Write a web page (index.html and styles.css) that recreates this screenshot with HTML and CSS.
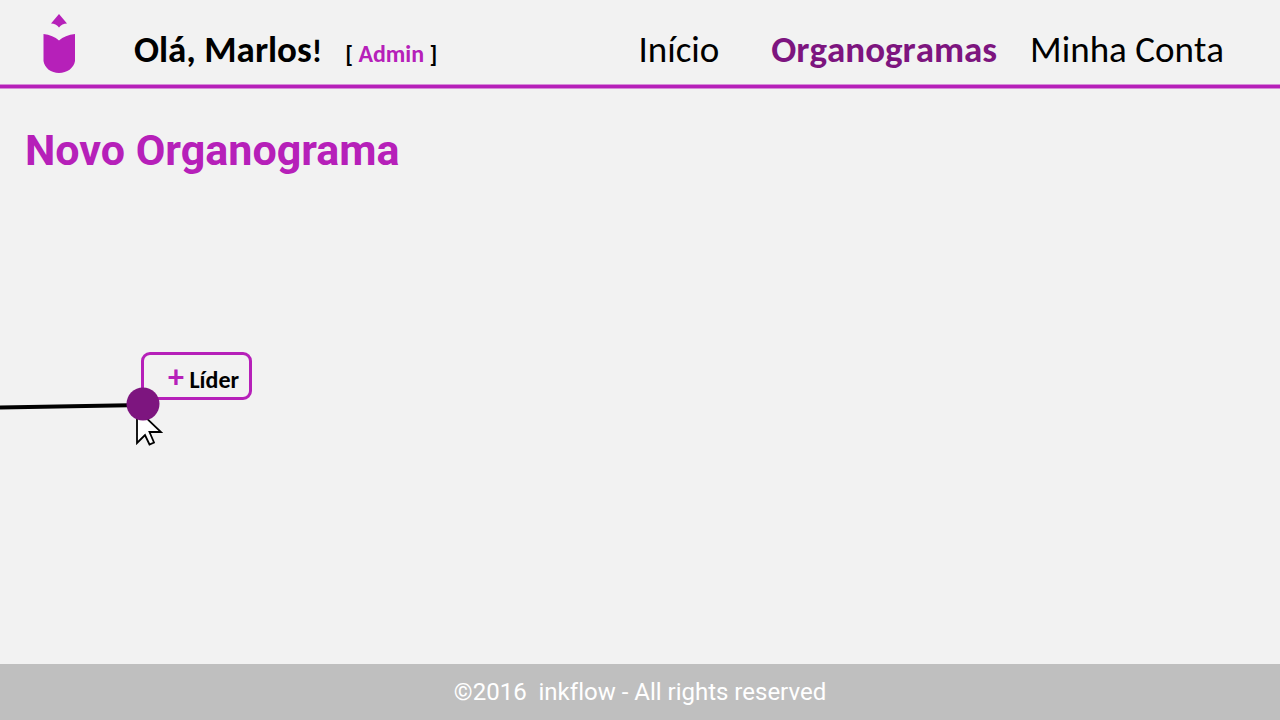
FILE: index.html
```html
<!DOCTYPE html>
<html lang="pt-BR">
<head>
<meta charset="utf-8">
<meta name="viewport" content="width=device-width, initial-scale=1">
<title>Novo Organograma</title>
<link rel="stylesheet" href="styles.css">
</head>
<body>
<header class="header">
  <svg class="logo" viewBox="0 0 34 60" aria-label="inkflow" role="img">
    <path d="M17 0L25 9.500Q20 9.500 17 13.500Q14 9.500 9 9.500Z"/>
    <path d="M1.500 20Q11 21 17 26.500Q23 21 33 20V47C32 54 25 59 17 59C9 59 2.500 54 1.500 47Z"/>
  </svg>
  <p class="greeting"><span class="name">Olá, Marlos<span class="mark">!</span></span><span class="role">[ <span class="role-name">Admin</span> ]</span></p>
  <nav class="nav">
    <a class="link" href="#">Início</a>
    <a class="link current" href="#" aria-current="page">Organogramas</a>
    <a class="link" href="#">Minha Conta</a>
  </nav>
</header>
<main class="main">
  <h1 class="title">Novo Organograma</h1>
  <div class="canvas">
    <button class="node" type="button"><span class="plus">+</span> Líder</button>
    <svg class="overlay" width="170" height="270" aria-hidden="true">
      <path d="M0 215.500L143 213" stroke="#000" stroke-width="4"/>
      <path d="M137 217V251L145 243L149.500 252.500L154 250.500L149.500 240H161Z" fill="#fff" stroke="#000" stroke-width="1.800"/>
      <circle cx="143" cy="212" r="16.500" fill="#7d157f"/>
    </svg>
  </div>
</main>
<footer class="footer">©2016&nbsp; inkflow - All rights reserved</footer>
</body>
</html>
```
FILE: styles.css
```css
* { box-sizing: border-box; }
body {
  margin: 0;
  min-height: 100vh;
  display: flex;
  flex-direction: column;
  background: #f2f2f2;
  color: #000;
  font-family: Calibri, Carlito, Lato, sans-serif;
  font-variant-ligatures: none;
}
.header {
  display: flex;
  align-items: center;
  height: 88px;
  padding: 0 56px 0 42px;
  border-bottom: 3px solid #b620b9;
  box-shadow: 0 1px #d68cd8, inset 0 -1px #d68cd8;
  font-kerning: none;
}
.logo { width: 34px; height: 60px; margin-top: 3px; fill: #b620b9; }
.greeting {
  display: flex;
  align-items: baseline;
  gap: 23px;
  margin: 16px 0 0 58px;
  font-weight: bold;
  white-space: nowrap;
}
.name { font-size: 37px; line-height: 44px; }
.mark { font-size: 32px; }
.role { font-size: 24px; }
.role-name { color: #b620b9; }
.nav {
  display: flex;
  margin: 14px 0 0 auto;
  font-size: 37px;
  line-height: 44px;
  white-space: nowrap;
}
.link { color: #000; text-decoration: none; }
.current { margin: 0 33px 0 52px; color: #7d157f; font-weight: bold; }
.main { flex: 1; display: flex; flex-direction: column; padding-top: 36px; }
.title {
  margin: 0 0 0 25px;
  color: #b620b9;
  font: bold 43px/52px Roboto, sans-serif;
}
.canvas { position: relative; flex: 1; margin-top: 16px; overflow: hidden; }
.node {
  position: absolute;
  left: 141px;
  top: 160px;
  width: 111px;
  height: 48px;
  padding: 6px 10px 0 0;
  border: 3px solid #b620b9;
  border-radius: 9px;
  background: none;
  color: #000;
  font: bold 24px/24px Calibri, Carlito, Lato, sans-serif;
  text-align: right;
  white-space: nowrap;
}
.plus { color: #b620b9; font-size: 32px; line-height: 24px; }
.overlay { position: absolute; left: 0; top: 0; }
.footer {
  height: 56px;
  background: #bfbfbf;
  color: #fff;
  font-family: Roboto, sans-serif;
  font-size: 24px;
  line-height: 56px;
  text-align: center;
}
```
